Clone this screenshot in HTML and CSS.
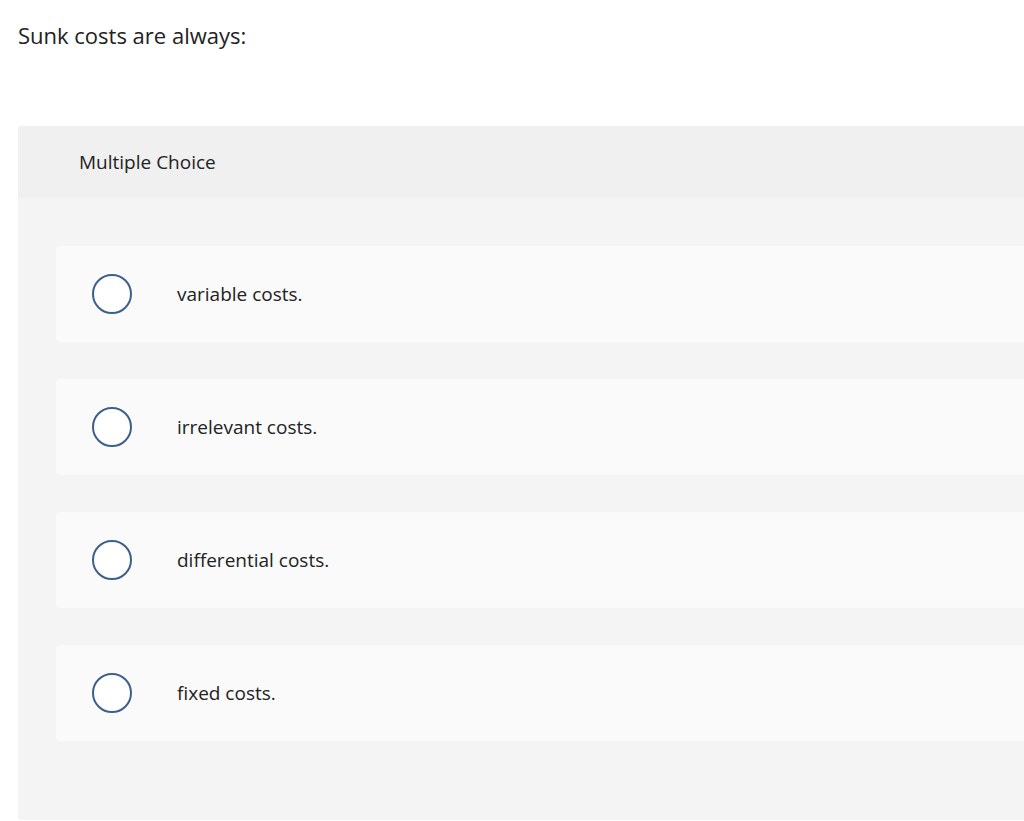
FILE: index.html
```html
<!DOCTYPE html>
<html>
<head>
<meta charset="utf-8">
<link rel="stylesheet" href="styles.css">
</head>
<body>
<div class="page">
  <h1 class="question">Sunk costs are always:</h1>
  <section class="panel">
    <div class="panel-head">Multiple Choice</div>
    <div class="panel-body">
      <label class="option"><span class="radio"></span><span class="label">variable costs.</span></label>
      <label class="option"><span class="radio"></span><span class="label">irrelevant costs.</span></label>
      <label class="option"><span class="radio"></span><span class="label">differential costs.</span></label>
      <label class="option"><span class="radio"></span><span class="label">fixed costs.</span></label>
    </div>
  </section>
</div>
</body>
</html>
```
FILE: styles.css
```css
html, body {
  margin: 0;
  padding: 0;
  background: #ffffff;
  overflow: hidden;
}
body {
  font-family: "Open Sans", "Liberation Sans", sans-serif;
  color: #222222;
}
.page {
  padding-left: 18px;
}
.question {
  margin: 0;
  padding-top: 21px;
  height: 126px;
  box-sizing: border-box;
  font-size: 22px;
  line-height: 28px;
  font-weight: 400;
  color: #222;
}
.panel {
  margin-right: -40px;
  background: #f4f4f4;
  border-radius: 3px;
  height: 694px;
}
.panel-head {
  background: #f0f0f0;
  height: 72px;
  box-sizing: border-box;
  padding-left: 61px;
  display: flex;
  align-items: center;
  font-size: 19px;
  color: #222;
  border-radius: 3px 3px 0 0;
}
.panel-body {
  padding: 48px 0 0 38px;
  display: flex;
  flex-direction: column;
  gap: 37px;
}
.option {
  height: 96px;
  background: #fafafa;
  border-radius: 4px;
  display: flex;
  align-items: center;
  padding-left: 36px;
}
.radio {
  width: 40px;
  height: 40px;
  box-sizing: border-box;
  border: 2px solid #3d5f8e;
  border-radius: 50%;
  background: #ffffff;
  flex: none;
}
.label {
  margin-left: 45px;
  font-size: 19px;
  color: #222;
}
```
